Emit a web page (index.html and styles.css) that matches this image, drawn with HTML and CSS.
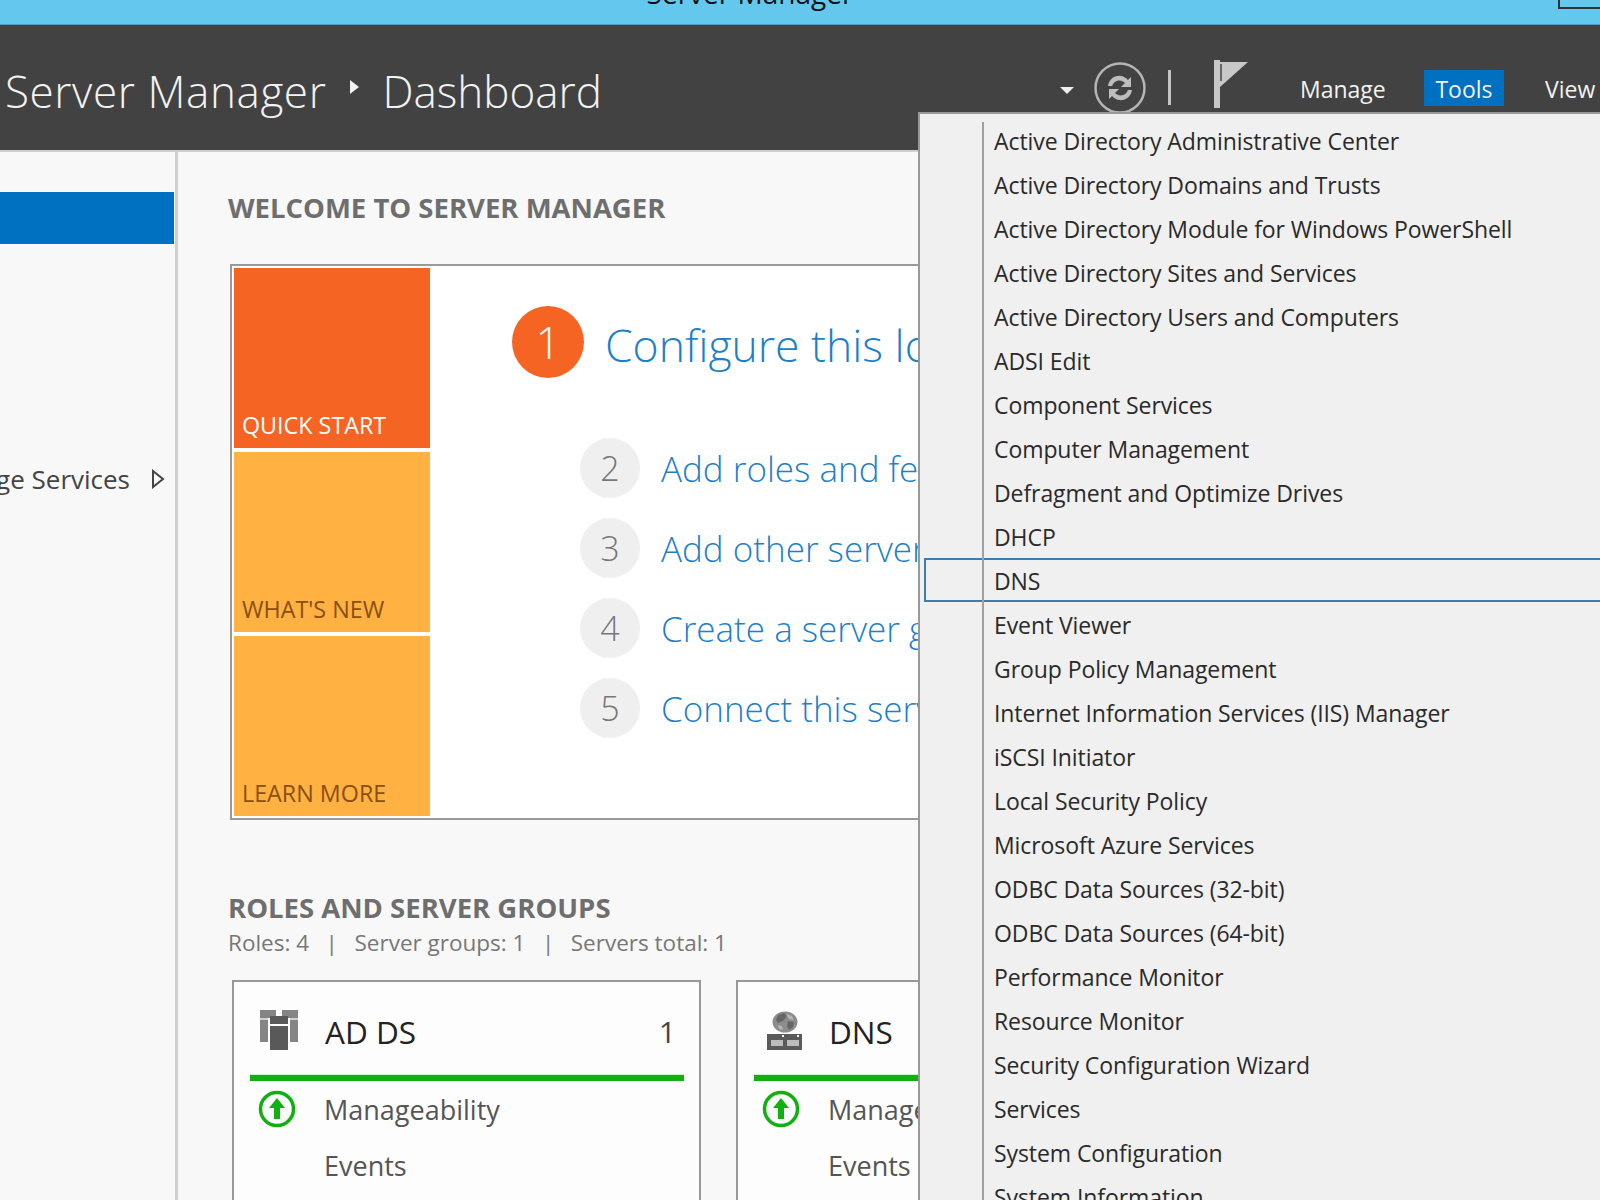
FILE: index.html
```html
<!DOCTYPE html>
<html>
<head>
    <title>Server Manager</title>
    <link rel="stylesheet" href="styles.css">
</head>
<body>
    <div class="window">
        <div class="titlebar">
            <span class="title">Server Manager</span>
            <span class="winbtn"></span>
        </div>

        <div class="header">
            <div class="crumb crumb-first">Server Manager</div>
            <div class="crumb-arrow"></div>
            <div class="crumb">Dashboard</div>
            <div class="tools">
                <div class="caret"></div>
                <svg class="refresh" width="56" height="56" viewBox="0 0 56 56">
                    <circle cx="28" cy="28" r="24.5" fill="none" stroke="#b5b5b5" stroke-width="2.5"/>
                    <path d="M16 26c1-7 7-11 13-10 3 .4 5 2 7 4l3-3v10H29l4-4c-2-2-5-3-8-2-3 .8-4 3-5 5z" fill="#bdbdbd"/>
                    <path d="M40 30c-1 7-7 11-13 10-3-.4-5-2-7-4l-3 3V29h10l-4 4c2 2 5 3 8 2 3-.8 4-3 5-5z" fill="#bdbdbd"/>
                </svg>
                <div class="divider"></div>
                <svg class="flag" width="34" height="48" viewBox="0 0 34 48">
                    <path d="M0 0h6v48H0z" fill="#c8c8c8"/>
                    <path d="M6 2h28L6 27z" fill="#c8c8c8"/>
                    <path d="M7 4v17" stroke="#666" stroke-width="2"/>
                </svg>
                <a class="menu-link link-manage">Manage</a>
                <a class="menu-link link-tools">Tools</a>
                <a class="menu-link link-view">View</a>
            </div>
        </div>

        <div class="main">
            <div class="sidebar">
                <div class="side-active"></div>
                <div class="side-item">
                    <span>File and Storage Services</span>
                    <svg width="14" height="20" viewBox="0 0 14 20"><path d="M2 2l10 8-10 8z" fill="none" stroke="#444" stroke-width="2"/></svg>
                </div>
            </div>

            <div class="content">
                <h2 class="heading">WELCOME TO SERVER MANAGER</h2>

                <div class="panel">
                    <div class="tiles">
                        <div class="tile tile-start">QUICK START</div>
                        <div class="tile tile-other">WHAT'S NEW</div>
                        <div class="tile tile-other">LEARN MORE</div>
                    </div>
                    <div class="steps">
                        <div class="step-main">
                            <span class="num-big">1</span>
                            <span class="step-big">Configure this local server</span>
                        </div>
                        <div class="step"><span class="num">2</span><span class="step-text">Add roles and features</span></div>
                        <div class="step"><span class="num">3</span><span class="step-text">Add other servers to manage</span></div>
                        <div class="step"><span class="num">4</span><span class="step-text">Create a server group</span></div>
                        <div class="step"><span class="num">5</span><span class="step-text">Connect this server to cloud services</span></div>
                    </div>
                </div>

                <h2 class="heading heading-roles">ROLES AND SERVER GROUPS</h2>
                <div class="counts">
                    <span>Roles: 4</span><span class="pipe">|</span>
                    <span>Server groups: 1</span><span class="pipe">|</span>
                    <span>Servers total: 1</span>
                </div>

                <div class="cards">
                    <div class="card">
                        <div class="card-head">
                            <svg class="role-icon" width="38" height="40" viewBox="0 0 38 40">
                                <path d="M0 0h16v8H0zM22 0h16v8H22zM0 10h8v22H0zM30 10h8v22h-8z" fill="#858585"/>
                                <path d="M0 8h8v2H0zM30 8h8v2h-8z" fill="#cfcfcf"/>
                                <path d="M10 6h18v8H10zM10 16h18v24H10z" fill="#595959"/>
                            </svg>
                            <span class="card-name">AD DS</span>
                            <span class="card-count">1</span>
                        </div>
                        <div class="card-bar"></div>
                        <div class="card-row">
                            <svg class="status" width="38" height="38" viewBox="0 0 38 38">
                                <circle cx="19" cy="19" r="16.5" fill="none" stroke="#0fb00f" stroke-width="3.5"/>
                                <path d="M19 8l8 10h-5v11h-6V18h-5z" fill="#0fb00f"/>
                            </svg>
                            <span>Manageability</span>
                        </div>
                        <div class="card-row"><span class="no-icon">Events</span></div>
                    </div>
                    <div class="card">
                        <div class="card-head">
                            <svg class="role-icon" width="38" height="40" viewBox="-3 0 38 40">
                                <ellipse cx="18" cy="12" rx="12.5" ry="10.5" fill="#8c8c8c"/>
                                <path d="M11 5l6-2 3 3-4 5-5 2-2-3zM21 11l6 1-1 5-4 3-2-4z" fill="#666"/>
                                <path d="M19 4l6 2 2 4-5-1zM11 15l4 1 1 4-4-1z" fill="#b4b4b4"/>
                                <path d="M0 24h35v16H0z" fill="#5a5a5a"/>
                                <path d="M4 30h12v6H4zM20 30h12v6H20z" fill="#bcbcbc"/>
                                <path d="M15 25h2v2h-2zM30 25h2v2h-2z" fill="#f4f4f4"/>
                            </svg>
                            <span class="card-name">DNS</span>
                        </div>
                        <div class="card-bar"></div>
                        <div class="card-row">
                            <svg class="status" width="38" height="38" viewBox="0 0 38 38">
                                <circle cx="19" cy="19" r="16.5" fill="none" stroke="#0fb00f" stroke-width="3.5"/>
                                <path d="M19 8l8 10h-5v11h-6V18h-5z" fill="#0fb00f"/>
                            </svg>
                            <span>Manageability</span>
                        </div>
                        <div class="card-row"><span class="no-icon">Events</span></div>
                    </div>
                </div>
            </div>
        </div>

        <div class="dropdown">
            <div class="drop-item">Active Directory Administrative Center</div>
            <div class="drop-item">Active Directory Domains and Trusts</div>
            <div class="drop-item">Active Directory Module for Windows PowerShell</div>
            <div class="drop-item">Active Directory Sites and Services</div>
            <div class="drop-item">Active Directory Users and Computers</div>
            <div class="drop-item">ADSI Edit</div>
            <div class="drop-item">Component Services</div>
            <div class="drop-item">Computer Management</div>
            <div class="drop-item">Defragment and Optimize Drives</div>
            <div class="drop-item">DHCP</div>
            <div class="drop-item drop-hover">DNS</div>
            <div class="drop-item">Event Viewer</div>
            <div class="drop-item">Group Policy Management</div>
            <div class="drop-item">Internet Information Services (IIS) Manager</div>
            <div class="drop-item">iSCSI Initiator</div>
            <div class="drop-item">Local Security Policy</div>
            <div class="drop-item">Microsoft Azure Services</div>
            <div class="drop-item">ODBC Data Sources (32-bit)</div>
            <div class="drop-item">ODBC Data Sources (64-bit)</div>
            <div class="drop-item">Performance Monitor</div>
            <div class="drop-item">Resource Monitor</div>
            <div class="drop-item">Security Configuration Wizard</div>
            <div class="drop-item">Services</div>
            <div class="drop-item">System Configuration</div>
            <div class="drop-item">System Information</div>
        </div>
    </div>
</body>
</html>
```

FILE: styles.css
```css
html, body { margin: 0; padding: 0; height: 100%; overflow: hidden; }
body { font-family: "Open Sans", "Noto Sans", sans-serif; background: #f8f8f8; color: #222; }
.window { position: relative; width: 1600px; height: 1200px; overflow: hidden; display: flex; flex-direction: column; }

.titlebar { height: 24px; flex: none; background: #63c7ee; border-bottom: 1px solid #5a9cc0; position: relative; overflow: hidden; display: flex; justify-content: center; }
.title { font-size: 28px; line-height: 28px; margin-top: -21px; margin-left: -100px; color: #111; white-space: nowrap; }
.winbtn { position: absolute; left: 1558px; top: -20px; width: 60px; height: 25px; border: 2px solid #333; }

.header { height: 125px; flex: none; background: #424242; color: #f2f2f2; display: flex; align-items: center; padding-left: 5px; border-bottom: 2px solid #cfcfcf; }
.crumb { font-size: 44px; font-weight: 300; margin-top: 6px; }
.crumb-first { letter-spacing: 0.6px; }
.crumb-arrow { width: 0; height: 0; margin: -2px 23px 0 24px; border-left: 9px solid #f2f2f2; border-top: 7px solid transparent; border-bottom: 7px solid transparent; }
.tools { position: absolute; left: 0; top: 25px; width: 1600px; height: 125px; }
.caret { position: absolute; left: 1060px; top: 62px; border-top: 7px solid #eee; border-left: 7px solid transparent; border-right: 7px solid transparent; }
.refresh { position: absolute; left: 1092px; top: 35px; }
.divider { position: absolute; left: 1168px; top: 45px; width: 3px; height: 35px; background: #c4c4c4; }
.flag { position: absolute; left: 1214px; top: 35px; }
.menu-link { position: absolute; top: 45px; height: 36px; line-height: 38px; font-size: 23px; color: #f2f2f2; }
.link-manage { left: 1300px; }
.link-tools { left: 1424px; width: 80px; text-align: center; background: #0070c0; }
.link-view { left: 1545px; }

.main { flex: 1; display: flex; min-height: 0; }
.sidebar { width: 175px; flex: none; border-right: 3px solid #cfcfcf; padding-top: 40px; overflow: hidden; }
.side-active { height: 52px; background: #0070c0; margin-right: 1px; }
.side-item { display: flex; justify-content: flex-end; align-items: center; gap: 21px; margin-top: 215px; padding-right: 10px; white-space: nowrap; font-size: 26px; color: #444; height: 40px; }
.side-item svg { flex: none; }

.content { flex: 1; min-width: 0; padding-left: 50px; overflow: hidden; }
.heading { margin: 0; font-size: 27.5px; line-height: 36px; font-weight: 700; color: #6e6e6e; white-space: nowrap; }
.content > .heading:first-child { margin-top: 38px; }

.panel { width: 1400px; height: 548px; margin: 38px 0 0 2px; background: #fff; border: 2px solid #999; padding: 2px; display: flex; }
.tiles { width: 196px; flex: none; display: flex; flex-direction: column; gap: 4px; }
.tile { flex: 1; display: flex; align-items: flex-end; padding: 0 0 8px 8px; font-size: 23.3px; line-height: 30px; }
.tile-start { background: #f56423; color: #fff; }
.tile-other { background: #ffb142; color: #8a4f12; }

.steps { padding: 38px 0 0 82px; }
.step-main { display: flex; align-items: center; gap: 21px; height: 72px; margin-bottom: 60px; white-space: nowrap; }
.num-big { width: 72px; height: 72px; border-radius: 50%; background: #f56423; color: #fff; font-size: 44px; font-weight: 300; display: flex; align-items: center; justify-content: center; flex: none; }
.step-big { font-size: 44.5px; font-weight: 300; color: #1f7fc9; margin-top: 4px; }
.step { display: flex; align-items: center; gap: 21px; height: 60px; margin: 0 0 20px 68px; white-space: nowrap; }
.num { width: 60px; height: 60px; border-radius: 50%; background: #efefef; color: #777; font-size: 34px; font-weight: 300; display: flex; align-items: center; justify-content: center; flex: none; }
.step-text { font-size: 35px; font-weight: 300; color: #1f7fc9; }

.heading-roles { margin-top: 70px; }
.counts { display: flex; margin-top: -1px; font-size: 22.5px; line-height: 36px; color: #777; white-space: nowrap; }
.pipe { margin: 0 16.5px; }

.cards { display: flex; gap: 35px; margin: 19px 0 0 4px; }
.card { width: 469px; height: 400px; flex: none; box-sizing: border-box; background: #fdfdfd; border: 2px solid #999; padding: 0 15px 0 16px; }
.card-head { display: flex; align-items: center; height: 92px; padding: 0 8px 0 10px; }
.role-icon { flex: none; margin-top: 4px; }
.card-name { font-size: 31.5px; margin: 6px 0 0 27px; color: #222; }
.card-count { font-size: 30px; margin: 6px 0 0 auto; color: #444; }
.card-bar { height: 6px; background: #0fb00f; border-top: 1px solid #c9f5c9; }
.card-row { display: flex; align-items: center; height: 56px; padding-left: 8px; font-size: 27px; color: #555; }
.status { flex: none; margin-right: 28px; }
.no-icon { margin-left: 66px; }

.dropdown { position: absolute; left: 918px; top: 112px; right: 0; bottom: 0; background: #f0f0f0; border-left: 2px solid #999; border-top: 2px solid #999; padding-top: 4px; overflow: hidden; }
.dropdown::after { content: ""; position: absolute; left: 62px; top: 8px; bottom: 0; width: 2px; background: #a0a0a0; }
.drop-item { position: relative; height: 44px; line-height: 46px; padding-left: 74px; font-size: 23px; letter-spacing: -0.08px; color: #2a2a2a; white-space: nowrap; }
.drop-hover::before { content: ""; position: absolute; left: 4px; right: -4px; top: 0; height: 40px; border: 2px solid #3f7cae; }
```
